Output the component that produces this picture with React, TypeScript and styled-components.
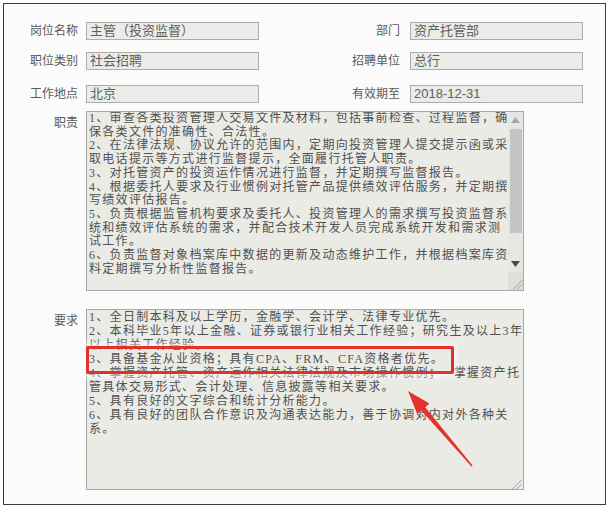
import React from "react"
import styled, { createGlobalStyle } from "styled-components"

const GlobalStyle = createGlobalStyle`
  html, body {
    margin: 0;
    padding: 0;
    background: #ffffff;
  }
  body {
    font-family: "Liberation Sans", "Noto Sans CJK SC", sans-serif;
  }
`

const Frame = styled.div`
  position: relative;
  box-sizing: border-box;
  margin: 3px 0 0 3px;
  width: 603px;
  height: 502px;
  border: 1px solid #3c3c3c;
  background: #fbfbfb;
  padding-top: 18px;
`

const FieldRow = styled.div<{ $top: number }>`
  display: grid;
  grid-template-columns: 82px 173px 151px 173px;
  align-items: center;
  margin-top: ${({ $top }) => $top}px;
`

const Label = styled.div<{ $pad: number }>`
  text-align: right;
  padding-right: ${({ $pad }) => $pad}px;
  font-size: 12px;
  line-height: 18px;
  color: #5a5a5a;
  white-space: nowrap;
`

const Input = styled.div`
  box-sizing: border-box;
  height: 18px;
  border: 1px solid #adadad;
  background: #ebebe7;
  padding: 0 3px;
  font-size: 13px;
  line-height: 16px;
  color: #606060;
  white-space: nowrap;
  overflow: hidden;
`

const AreaRow = styled.div<{ $top: number }>`
  display: grid;
  grid-template-columns: 82px 438px;
  margin-top: ${({ $top }) => $top}px;
`

const AreaLabel = styled.div`
  text-align: right;
  padding-right: 8px;
  padding-top: 5px;
  font-size: 12px;
  line-height: 14px;
  color: #5a5a5a;
`

const Area = styled.div<{ $h: number }>`
  position: relative;
  box-sizing: border-box;
  height: ${({ $h }) => $h}px;
  border: 1px solid #a9a9a9;
  background: #ebebe6;
  display: flex;
  overflow: hidden;
`

const AreaText = styled.div<{ $lh: number }>`
  flex: 1;
  min-width: 0;
  padding: 0 0 0 2px;
  font-family: "Liberation Serif", "Noto Sans CJK SC", serif;
  font-size: 12px;
  letter-spacing: 1.3px;
  line-height: ${({ $lh }) => $lh}px;
  color: #505050;
  white-space: pre;
  overflow: hidden;
`

const ScrollBar = styled.div`
  flex: none;
  width: 15px;
  display: flex;
  flex-direction: column;
  background: #e6e6e2;
`

const ScrollButton = styled.div`
  height: 16px;
  display: flex;
  align-items: center;
  justify-content: center;
`

const Track = styled.div`
  flex: 1;
  padding-top: 1px;
`

const Thumb = styled.div`
  margin: 0 auto;
  width: 12px;
  height: 104px;
  background: #c4c4c2;
`

const Corner = styled.div`
  height: 18px;
  display: flex;
  align-items: flex-end;
  justify-content: flex-end;
  background: #dededa;
`

const FloatingGrip = styled.div`
  position: absolute;
  right: 1px;
  bottom: 1px;
  width: 12px;
  height: 12px;
`

const Highlight = styled.div`
  position: absolute;
  left: 82px;
  top: 342px;
  width: 368px;
  height: 28px;
  box-sizing: border-box;
  border: 3px solid #e3302b;
  border-radius: 2px;
  box-shadow: 0 0 5px 3px rgba(255, 255, 255, 0.6);
`

const ArrowLayer = styled.svg`
  position: absolute;
  left: -4px;
  top: -4px;
  pointer-events: none;
`

const Triangle = ({ up, color }: { up?: boolean; color: string }) => (
  <svg width="9" height="6" viewBox="0 0 9 6">
    <polygon points={up ? "0,6 9,6 4.5,0" : "0,0 9,0 4.5,6"} fill={color} />
  </svg>
)

const Grip = () => (
  <svg width="12" height="12" viewBox="0 0 12 12">
    <line x1="11.5" y1="2" x2="2" y2="11.5" stroke="#9a9a9a" strokeWidth="1" />
    <line x1="11.5" y1="6" x2="6" y2="11.5" stroke="#9a9a9a" strokeWidth="1" />
  </svg>
)

const duties = [
  "1、审查各类投资管理人交易文件及材料，包括事前检查、过程监督，确",
  "保各类文件的准确性、合法性。",
  "2、在法律法规、协议允许的范围内，定期向投资管理人提交提示函或采",
  "取电话提示等方式进行监督提示，全面履行托管人职责。",
  "3、对托管资产的投资运作情况进行监督，并定期撰写监督报告。",
  "4、根据委托人要求及行业惯例对托管产品提供绩效评估服务，并定期撰",
  "写绩效评估报告。",
  "5、负责根据监管机构要求及委托人、投资管理人的需求撰写投资监督系",
  "统和绩效评估系统的需求，并配合技术开发人员完成系统开发和需求测",
  "试工作。",
  "6、负责监督对象档案库中数据的更新及动态维护工作，并根据档案库资",
  "料定期撰写分析性监督报告。",
]

const requirements = [
  "1、全日制本科及以上学历，金融学、会计学、法律专业优先。",
  "2、本科毕业5年以上金融、证券或银行业相关工作经验；研究生及以上3年",
  "以上相关工作经验。",
  "3、具备基金从业资格；具有CPA、FRM、CFA资格者优先。",
  "4、掌握资产托管、资产运作相关法律法规及市场操作惯例；　 掌握资产托",
  "管具体交易形式、会计处理、信息披露等相关要求。",
  "5、具有良好的文字综合和统计分析能力。",
  "6、具有良好的团队合作意识及沟通表达能力，善于协调对内对外各种关",
  "系。",
]

const fields = [
  { top: 0, left: ["岗位名称", "主管（投资监督）"], right: ["部门", "资产托管部"] },
  { top: 12, left: ["职位类别", "社会招聘"], right: ["招聘单位", "总行"] },
  { top: 15, left: ["工作地点", "北京"], right: ["有效期至", "2018-12-31"] },
]

export default function App() {
  return (
    <>
      <GlobalStyle />
      <Frame>
        {fields.map((f) => (
          <FieldRow key={f.left[0]} $top={f.top}>
            <Label $pad={8}>{f.left[0]}</Label>
            <Input>{f.left[1]}</Input>
            <Label $pad={10}>{f.right[0]}</Label>
            <Input>{f.right[1]}</Input>
          </FieldRow>
        ))}

        <AreaRow $top={8}>
          <AreaLabel>职责</AreaLabel>
          <Area $h={180}>
            <AreaText $lh={13.7}>{duties.join("\n")}</AreaText>
            <ScrollBar>
              <ScrollButton>
                <Triangle up color="#a8a8a8" />
              </ScrollButton>
              <Track>
                <Thumb />
              </Track>
              <ScrollButton>
                <Triangle color="#4a4a4a" />
              </ScrollButton>
              <Corner>
                <Grip />
              </Corner>
            </ScrollBar>
          </Area>
        </AreaRow>

        <AreaRow $top={18}>
          <AreaLabel>要求</AreaLabel>
          <Area $h={181}>
            <AreaText $lh={14}>{requirements.join("\n")}</AreaText>
            <FloatingGrip>
              <Grip />
            </FloatingGrip>
          </Area>
        </AreaRow>

        <Highlight />
        <ArrowLayer width="610" height="508" viewBox="0 0 610 508">
          <polygon
            points="408,391 429.4,403.6 425.2,407.2 472.6,465.5 471.4,466.5 421.4,410.4 417.2,414"
            fill="#e5332b"
          />
        </ArrowLayer>
      </Frame>
    </>
  )
}
